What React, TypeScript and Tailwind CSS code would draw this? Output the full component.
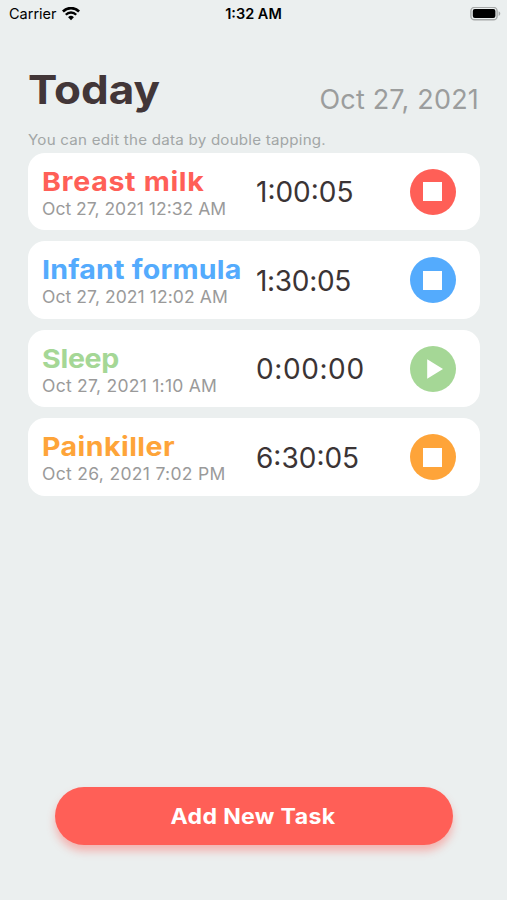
type Task = {
  name: string;
  date: string;
  time: string;
  running: boolean;
  textColor: string;
  bgColor: string;
  nameSpacing: string;
  dateSpacing: string;
  timeSpacing: string;
};

const tasks: Task[] = [
  {
    name: "Breast milk",
    date: "Oct 27, 2021 12:32 AM",
    time: "1:00:05",
    running: true,
    textColor: "text-[#ff5f57]",
    bgColor: "bg-[#ff5f57]",
    nameSpacing: "tracking-[0.6px]",
    dateSpacing: "tracking-[0px]",
    timeSpacing: "tracking-[0px]",
  },
  {
    name: "Infant formula",
    date: "Oct 27, 2021 12:02 AM",
    time: "1:30:05",
    running: true,
    textColor: "text-[#54abfd]",
    bgColor: "bg-[#54abfd]",
    nameSpacing: "tracking-[0.18px]",
    dateSpacing: "tracking-[0.07px]",
    timeSpacing: "tracking-[-0.3px]",
  },
  {
    name: "Sleep",
    date: "Oct 27, 2021 1:10 AM",
    time: "0:00:00",
    running: false,
    textColor: "text-[#a5d796]",
    bgColor: "bg-[#a5d796]",
    nameSpacing: "tracking-[-0.27px]",
    dateSpacing: "tracking-[0.25px]",
    timeSpacing: "tracking-[0.6px]",
  },
  {
    name: "Painkiller",
    date: "Oct 26, 2021 7:02 PM",
    time: "6:30:05",
    running: true,
    textColor: "text-[#fea439]",
    bgColor: "bg-[#fea439]",
    nameSpacing: "tracking-[0.38px]",
    dateSpacing: "tracking-[0.3px]",
    timeSpacing: "tracking-[0px]",
  },
];

function StatusBar() {
  return (
    <div className="grid h-7 grid-cols-3 items-center pl-[9px] pr-[6px] text-black">
      <div className="flex items-center gap-[5px]">
        <span className="text-[14.5px] leading-none">Carrier</span>
        <svg width="18" height="14" viewBox="0 0 18 14" fill="none" stroke="currentColor">
          <path d="M0.9 4.5a11.3 11.3 0 0 1 16.2 0" strokeWidth="2.6" />
          <path d="M3.8 7.7a7.2 7.2 0 0 1 10.4 0" strokeWidth="2.3" />
          <path d="M9 13.2 6.1 10.2a4.2 4.2 0 0 1 5.8 0z" fill="currentColor" stroke="none" />
        </svg>
      </div>
      <span className="pr-[3px] text-center text-[14.5px] font-semibold leading-none">1:32 AM</span>
      <svg className="justify-self-end" width="31" height="14" viewBox="0 0 31 14" fill="none">
        <rect x="0.9" y="0.4" width="26.2" height="12.4" rx="3.6" stroke="#a6a8a8" strokeWidth="1.4" />
        <rect x="2.8" y="2.1" width="22.6" height="9" rx="2" fill="black" />
        <path d="M28.6 4.3c2.2.8 2.2 3.8 0 4.6z" fill="#a6a8a8" />
      </svg>
    </div>
  );
}

function TaskCard({ task }: { task: Task }) {
  return (
    <div className="flex h-[77.5px] items-center rounded-[17px] bg-white pl-[13.5px] pr-6">
      <div className="w-[214.5px] whitespace-nowrap pt-[6.5px]">
        <div className={`origin-left scale-x-110 text-[26px] font-bold leading-7 ${task.textColor} ${task.nameSpacing}`}>
          {task.name}
        </div>
        <div className={`origin-left scale-x-103 text-[17px] leading-[26px] text-[#9a9a9a] ${task.dateSpacing}`}>
          {task.date}
        </div>
      </div>
      <div className={`flex-1 whitespace-nowrap pt-px text-[28px] leading-none text-[#3b3435] ${task.timeSpacing}`}>
        {task.time}
      </div>
      <button className={`flex size-[46px] items-center justify-center rounded-full ${task.bgColor}`}>
        {task.running ? (
          <span className="mr-px size-[19px] bg-white" />
        ) : (
          <svg width="19" height="20" viewBox="0 0 19 20" fill="white">
            <path d="M3.2 0.2 19 10 3.2 19.8z" />
          </svg>
        )}
      </button>
    </div>
  );
}

export default function App() {
  return (
    <main className="flex h-[900px] w-[507px] flex-col bg-[#ebefef] font-['Inter',sans-serif]">
      <StatusBar />

      <header className="flex h-[100.75px] items-end justify-between px-[28px]">
        <h1 className="origin-left scale-x-110 pb-[14.75px] text-[40px] font-bold leading-[48px] text-[#423638]">Today</h1>
        <span className="pb-[12.75px] text-[27px] leading-8 tracking-[0.2px] text-[#9b9d9d]">Oct 27, 2021</span>
      </header>

      <p className="h-6 whitespace-nowrap pl-[28px] text-[14px] leading-[22px] tracking-[0.22px] text-[#a2a6a6]">
        <span className="inline-block origin-left scale-x-108">You can edit the data by double tapping.</span>
      </p>

      <section className="flex flex-col gap-[11px] pl-[28px] pr-[27px]">
        {tasks.map((task) => (
          <TaskCard key={task.name} task={task} />
        ))}
      </section>

      <button className="mx-auto mt-auto mb-[55.5px] h-[57.5px] w-[398px] rounded-full bg-[#ff5f57] pr-px pt-[2px] text-[21px] font-bold tracking-[0.3px] text-white shadow-[0_6px_9px_rgba(255,95,87,0.42)]">
        <span className="inline-block scale-x-110">Add New Task</span>
      </button>
    </main>
  );
}
